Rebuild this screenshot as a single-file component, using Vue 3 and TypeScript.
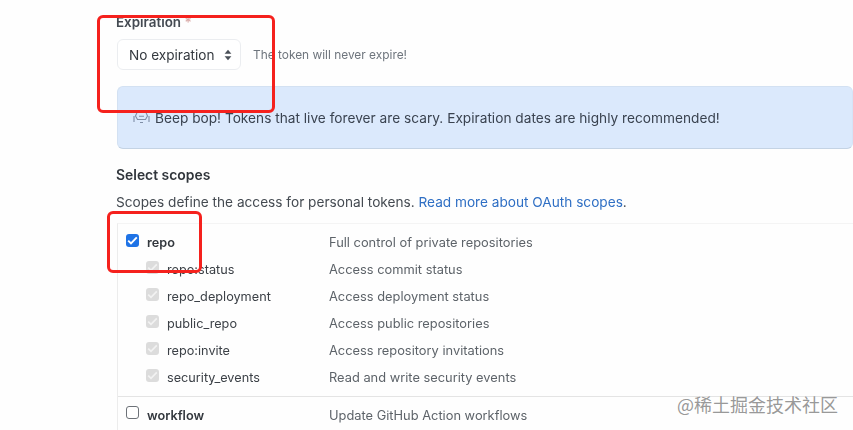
<script setup lang="ts">
interface Scope { name: string; desc: string }
const children: Scope[] = [
  { name: 'repo:status', desc: 'Access commit status' },
  { name: 'repo_deployment', desc: 'Access deployment status' },
  { name: 'public_repo', desc: 'Access public repositories' },
  { name: 'repo:invite', desc: 'Access repository invitations' },
  { name: 'security_events', desc: 'Read and write security events' },
]
</script>

<template>
  <div class="page">
    <div class="content">
      <div class="label">Expiration <span class="req">*</span></div>
      <div class="exp-row">
        <div class="select">
          <span>No expiration</span>
          <svg width="8" height="12" viewBox="0 0 8 12"><path d="M4 .8 7.4 4.8H.6ZM4 11.2.6 7.2h6.8Z" fill="#4a5058" /></svg>
        </div>
        <span class="note">The token will never expire!</span>
      </div>
      <div class="flash">
        <svg class="bot" width="17" height="13" viewBox="0 0 17 13" fill="none" stroke="#7f8ea6" stroke-width="1.1">
          <path d="M1 5v6M16 5v6" />
          <path d="M4 1.5h9l1.5 3.5-2 3.5h-8l-2-3.5Z" />
          <path d="M6 5.2h5M7 11.5h3" />
        </svg>
        <span>Beep bop! Tokens that live forever are scary. Expiration dates are highly recommended!</span>
      </div>
      <div class="heading">Select scopes</div>
      <div class="desc">Scopes define the access for personal tokens. <span class="link">Read more about OAuth scopes</span>.</div>
      <div class="box">
        <div class="group">
          <div class="row top">
            <span class="check on">
              <svg width="11" height="9" viewBox="0 0 11 9" fill="none"><path d="M1.2 4.6 4 7.4l5.8-6" stroke="#fff" stroke-width="1.9" /></svg>
            </span>
            <span class="name strong">repo</span>
            <span class="scope-desc">Full control of private repositories</span>
          </div>
          <div v-for="c in children" :key="c.name" class="row sub">
            <span class="check dim">
              <svg width="11" height="9" viewBox="0 0 11 9" fill="none"><path d="M1.2 4.6 4 7.4l5.8-6" stroke="#f2f2f2" stroke-width="1.7" /></svg>
            </span>
            <span class="name">{{ c.name }}</span>
            <span class="scope-desc">{{ c.desc }}</span>
          </div>
        </div>
        <div class="row top last">
          <span class="check off"></span>
          <span class="name strong">workflow</span>
          <span class="scope-desc">Update GitHub Action workflows</span>
        </div>
      </div>
    </div>
    <div class="mark mark-a"></div>
    <div class="mark mark-b"></div>
    <div class="watermark">@稀土掘金技术社区</div>
  </div>
</template>

<style>
html, body { margin: 0; background: #fff; overflow: hidden; }
</style>

<style scoped>
.page {
  position: relative;
  width: 853px;
  height: 430px;
  overflow: hidden;
  font-family: Inter, "Liberation Sans", sans-serif;
  font-size: 13px;
  color: #2a3037;
  background: #fefefe;
}
.content {
  padding: 14px 0 0 117px;
  filter: blur(0.35px);
}
.label { font-weight: 600; font-size: 13.4px; line-height: 17px; color: #444a52; margin-left: -1px; }
.req { color: #d9a9a6; }
.exp-row { display: flex; align-items: center; margin-top: 8px; height: 31px; }
.select {
  width: 124px;
  height: 31px;
  box-sizing: border-box;
  border: 1px solid #ebedf0;
  border-radius: 6px;
  background: #fff;
  display: flex;
  align-items: center;
  justify-content: space-between;
  padding: 0 8px 0 11px;
  font-size: 13.6px;
  color: #34393f;
}
.note { margin-left: 12px; font-size: 11.9px; color: #6e757d; }
.flash {
  margin-top: 16px;
  height: 63px;
  box-sizing: border-box;
  border: 1px solid #d3e1f2;
  border-bottom-color: #c4d3e4;
  border-right-color: #d5e4f7;
  border-radius: 6px;
  background: #dbe9fc;
  display: flex;
  align-items: center;
  padding: 0 0 0 15px;
  font-size: 13.7px;
  color: #3a4350;
}
.bot { margin-right: 5px; flex: none; }
.heading { margin-top: 18px; font-weight: 600; font-size: 13.9px; line-height: 17px; color: #30353b; margin-left: -1px; }
.desc { margin-top: 10px; font-size: 13.65px; line-height: 17px; color: #444a51; margin-left: -1px; }
.link { color: #2f6fc4; }
.box {
  margin-top: 12px;
  border-left: 1px solid #ececec;
  border-top: 1px solid #f4f4f4;
  margin-right: -1px;
  padding-top: 5px;
}
.group { border-bottom: 1px solid #e4e4e4; padding-bottom: 5px; }
.row { display: flex; align-items: center; height: 27px; position: relative; }
.check {
  position: absolute;
  width: 13px;
  height: 13px;
  box-sizing: border-box;
  border-radius: 3px;
  display: flex;
  align-items: center;
  justify-content: center;
}
.top .check { left: 8px; top: 5px; }
.sub .check { left: 28px; top: 5px; }
.on { background: #1f73e6; }
.dim { background: #dcdcdc; }
.off { border: 1px solid #6d7278; background: #fff; }
.name { font-size: 12.7px; color: #3c4147; margin-left: 49px; width: 162px; flex: none; }
.strong { font-weight: 600; margin-left: 29px; width: 182px; color: #33383e; }
.scope-desc { font-size: 12.85px; color: #5d6369; }
.last { height: 35px; }
.last .check { top: 9px; }
.last .name, .last .scope-desc { margin-top: 2px; }
.mark { position: absolute; border: 3.5px solid #f5211d; border-radius: 6px; box-sizing: border-box; }
.mark-a { left: 97px; top: 15px; width: 178px; height: 98px; }
.mark-b { left: 107px; top: 211px; width: 95px; height: 62px; }
.watermark {
  position: absolute;
  left: 677px;
  top: 394px;
  font-family: "Noto Sans CJK SC", sans-serif;
  font-size: 18px;
  line-height: 20px;
  white-space: nowrap;
  color: rgba(125, 125, 125, 0.8);
}
</style>
